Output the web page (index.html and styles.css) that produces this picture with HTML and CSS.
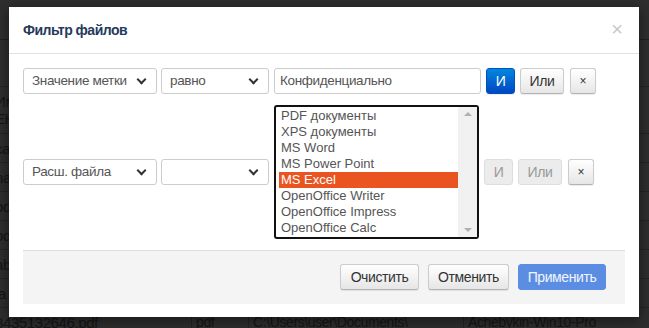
FILE: index.html
```html
<!DOCTYPE html>
<html lang="ru">

<head>
  <meta charset="UTF-8">
  <title>Фильтр файлов</title>
  <link rel="stylesheet" href="styles.css">
</head>

<body>

  <!-- Dimmed file table behind the dialog -->
  <div class="backdrop">
    <div class="row row-head"></div>
    <div class="row row-tall"></div>
    <div class="row row-tall"><span class="cell c1">Ими<br>ЕНИ</span></div>
    <div class="row"><span class="cell c1">ca</span></div>
    <div class="row"><span class="cell c1">na</span></div>
    <div class="row"><span class="cell c1">od</span></div>
    <div class="row"><span class="cell c1">od</span></div>
    <div class="row"><span class="cell c1">ab</span></div>
    <div class="row"><span class="cell c1">ja</span></div>
    <div class="row">
      <span class="cell c1">8435132646.pdf</span>
      <span class="cell c2">pdf</span>
      <span class="cell c3">C:\Users\user\Documents\</span>
      <span class="cell c4">Achebykin-Win10-Pro</span>
    </div>
  </div>

  <!-- Filter dialog -->
  <div class="modal">
    <div class="modal-header">
      <h3>Фильтр файлов</h3>
      <span class="close">×</span>
    </div>

    <div class="modal-body">
      <div class="filter-row">
        <div class="select sel-field">Значение метки<span class="chevron"></span></div>
        <div class="select sel-op">равно<span class="chevron"></span></div>
        <div class="text-input">Конфиденциально</div>
        <button class="btn btn-primary btn-and">И</button>
        <button class="btn btn-or">Или</button>
        <button class="btn btn-remove">×</button>
      </div>

      <div class="filter-row">
        <div class="select sel-field">Расш. файла<span class="chevron"></span></div>
        <div class="select sel-op"><span class="chevron"></span></div>
        <div class="listbox">
          <ul class="options">
            <li>PDF документы</li>
            <li>XPS документы</li>
            <li>MS Word</li>
            <li>MS Power Point</li>
            <li class="selected">MS Excel</li>
            <li>OpenOffice Writer</li>
            <li>OpenOffice Impress</li>
            <li>OpenOffice Calc</li>
          </ul>
          <div class="scrollbar">
            <span class="arrow-up"></span>
            <span class="arrow-down"></span>
          </div>
        </div>
        <button class="btn btn-and disabled">И</button>
        <button class="btn btn-or disabled">Или</button>
        <button class="btn btn-remove">×</button>
      </div>
    </div>

    <div class="modal-footer">
      <button class="btn btn-clear">Очистить</button>
      <button class="btn btn-cancel">Отменить</button>
      <button class="btn btn-apply">Применить</button>
    </div>
  </div>

</body>

</html>
```

FILE: styles.css
```css
/* Page */
body {
  margin: 0;
  background: #2e2e2e;
  font-family: 'Liberation Sans', Arial, sans-serif;
  overflow: hidden;
  height: 328px;
}

/* Dimmed table */
.backdrop {
  display: flex;
  flex-direction: column;
}

.row {
  flex: none;
  height: 28px;
  border-bottom: 1px solid #232323;
  display: flex;
  align-items: center;
  color: #151515;
  font-size: 14px;
  letter-spacing: -0.4px;
  white-space: nowrap;
}

.row-head {
  height: 39px;
  border-bottom-color: #1f1f1f;
}

.row-tall {
  height: 46px;
  line-height: 17px;
}

.cell {
  display: block;
  padding-left: 4px;
}

.c1 {
  width: 196px;
  margin-left: -9px;
  font-size: 15px;
}

.c2 {
  width: 52px;
  border-left: 1px solid #222;
}

.c3 {
  width: 210px;
  border-left: 1px solid #222;
}

.c4 {
  border-left: 1px solid #222;
}

/* Dialog */
.modal {
  position: absolute;
  left: 9px;
  top: 7px;
  width: 630px;
  height: 310px;
  background: #fff;
  box-shadow: 0 3px 12px rgba(0, 0, 0, 0.5);
  display: flex;
  flex-direction: column;
}

.modal-header {
  height: 46px;
  border-bottom: 1px solid #e2e2e2;
  display: flex;
  align-items: center;
  justify-content: space-between;
  padding: 0 16px 0 14px;
}

.modal-header h3 {
  margin: 0;
  font-size: 14px;
  letter-spacing: -0.5px;
  font-weight: bold;
  color: #253a5c;
}

.close {
  font-size: 20px;
  color: #c9c9c9;
  margin-top: -2px;
}

.modal-body {
  padding: 14px 14px 0;
  display: flex;
  flex-direction: column;
  gap: 11px;
}

.filter-row {
  display: flex;
  align-items: center;
}

/* Form controls */
.select,
.text-input {
  box-sizing: border-box;
  height: 26px;
  border: 1px solid #ccc;
  border-radius: 3px;
  background: #fff;
  color: #555;
  font-size: 13.5px;
  letter-spacing: -0.35px;
  line-height: 24px;
  padding-left: 8px;
  position: relative;
  white-space: nowrap;
}

.sel-field {
  width: 134px;
  margin-right: 4px;
}

.sel-op {
  width: 108px;
  margin-right: 5px;
}

.text-input {
  width: 207px;
  padding-left: 5px;
  margin-right: 5px;
}

.chevron {
  position: absolute;
  right: 11px;
  top: 7px;
  width: 5px;
  height: 5px;
  border-right: 2px solid #333;
  border-bottom: 2px solid #333;
  transform: rotate(45deg);
}

/* Listbox */
.listbox {
  box-sizing: border-box;
  width: 205px;
  height: 134px;
  border: 2px solid #111;
  border-radius: 3px;
  margin-right: 5px;
  display: flex;
  background: #fff;
}

.options {
  list-style: none;
  margin: 0;
  padding: 1px 0 0 3px;
  flex: 1;
  font-size: 13px;
  line-height: 16px;
  color: #555;
}

.options li {
  padding-left: 2px;
  white-space: nowrap;
}

.options .selected {
  background: #e95420;
  color: #fff;
}

.scrollbar {
  width: 19px;
  background: #f1f1f1;
  position: relative;
}

.arrow-up,
.arrow-down {
  position: absolute;
  left: 6px;
  width: 0;
  height: 0;
  border-left: 4px solid transparent;
  border-right: 4px solid transparent;
}

.arrow-up {
  top: 5px;
  border-bottom: 4px solid #b0b0b0;
}

.arrow-down {
  bottom: 5px;
  border-top: 4px solid #b0b0b0;
}

/* Buttons */
.btn {
  box-sizing: border-box;
  height: 26px;
  padding: 0;
  border: 1px solid #ccc;
  border-bottom-color: #b3b3b3;
  border-radius: 3px;
  background: linear-gradient(#fff, #e6e6e6);
  color: #333;
  font-family: 'Liberation Sans', Arial, sans-serif;
  font-size: 14px;
  letter-spacing: -0.4px;
  box-shadow: 0 1px 1px rgba(0, 0, 0, 0.08);
}

.btn-and {
  width: 29px;
  margin-right: 5px;
}

.btn-or {
  width: 44px;
  margin-right: 6px;
}

.btn-remove {
  width: 26px;
  font-size: 12px;
  letter-spacing: 0;
}

.btn-primary {
  background: linear-gradient(#0088dd, #0046c4);
  border-color: #0050c0;
  color: #fff;
}

.btn.disabled {
  background: #ececec;
  border-color: #ddd;
  color: #999;
  box-shadow: none;
}

/* Footer */
.modal-footer {
  margin: 11px 14px 0;
  background: #f4f4f4;
  border-top: 1px solid #ddd;
  height: 40px;
  padding: 13px 19px 0 0;
  display: flex;
  justify-content: flex-end;
  gap: 9px;
}

.btn-clear {
  width: 79px;
}

.btn-cancel {
  width: 81px;
}

.btn-apply {
  width: 88px;
  background: #5b8ee2;
  border-color: #5b8ee2;
  color: #f2f6ff;
  box-shadow: none;
}
```
